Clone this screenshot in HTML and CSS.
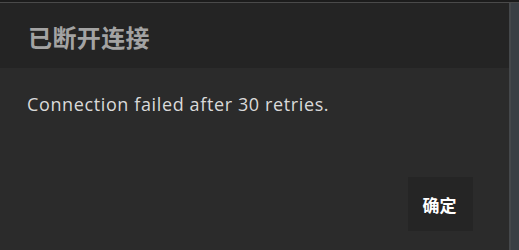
FILE: index.html
```html
<!DOCTYPE html>
<html lang="zh">
<head>
<meta charset="utf-8">
<title>已断开连接</title>
<link rel="stylesheet" href="styles.css">
</head>
<body>
<div class="topstrip"></div>
<div class="stage">
  <div class="dialog">
    <div class="dialog-header">
      <h1 class="dialog-title">已断开连接</h1>
    </div>
    <div class="dialog-body">
      <p class="dialog-message">Connection failed after 30 retries.</p>
      <div class="dialog-footer">
        <button class="btn-ok" type="button">确定</button>
      </div>
    </div>
  </div>
  <div class="side"></div>
</div>
</body>
</html>
```

FILE: styles.css
```css
html, body {
  margin: 0;
  padding: 0;
  height: 100%;
  overflow: hidden;
}
body {
  background: #2b2b2b;
  font-family: "Open Sans", "Noto Sans CJK SC", sans-serif;
}
.topstrip {
  height: 2px;
  background: #1c1c1c;
  border-bottom: 1px solid #4a4a4a;
}
.stage {
  display: flex;
  height: 247px;
}
.dialog {
  width: 509px;
  display: flex;
  flex-direction: column;
  border-right: 2px solid #45484b;
}
.side {
  flex: 1;
  background: #3a3f44;
}
.dialog-header {
  background: #242424;
  height: 65px;
  box-sizing: border-box;
  padding: 22px 0 0 28px;
}
.dialog-title {
  margin: 0;
  font-family: "Noto Sans CJK SC", sans-serif;
  font-size: 24px;
  line-height: 24px;
  font-weight: 700;
  letter-spacing: 0.4px;
  color: #a3a3a3;
}
.dialog-body {
  flex: 1;
  background: #2b2b2b;
  padding: 24px 36px 0 27px;
}
.dialog-message {
  margin: 0;
  font-size: 18px;
  line-height: 24px;
  letter-spacing: 0.62px;
  color: #dadada;
}
.dialog-footer {
  display: flex;
  justify-content: flex-end;
  margin-top: 61px;
}
.btn-ok {
  width: 65px;
  height: 54px;
  border: none;
  background: #252525;
  color: #ffffff;
  font-family: "Noto Sans CJK SC", sans-serif;
  font-size: 17px;
  font-weight: 700;
  padding: 0 2px 0 0;
}
```
